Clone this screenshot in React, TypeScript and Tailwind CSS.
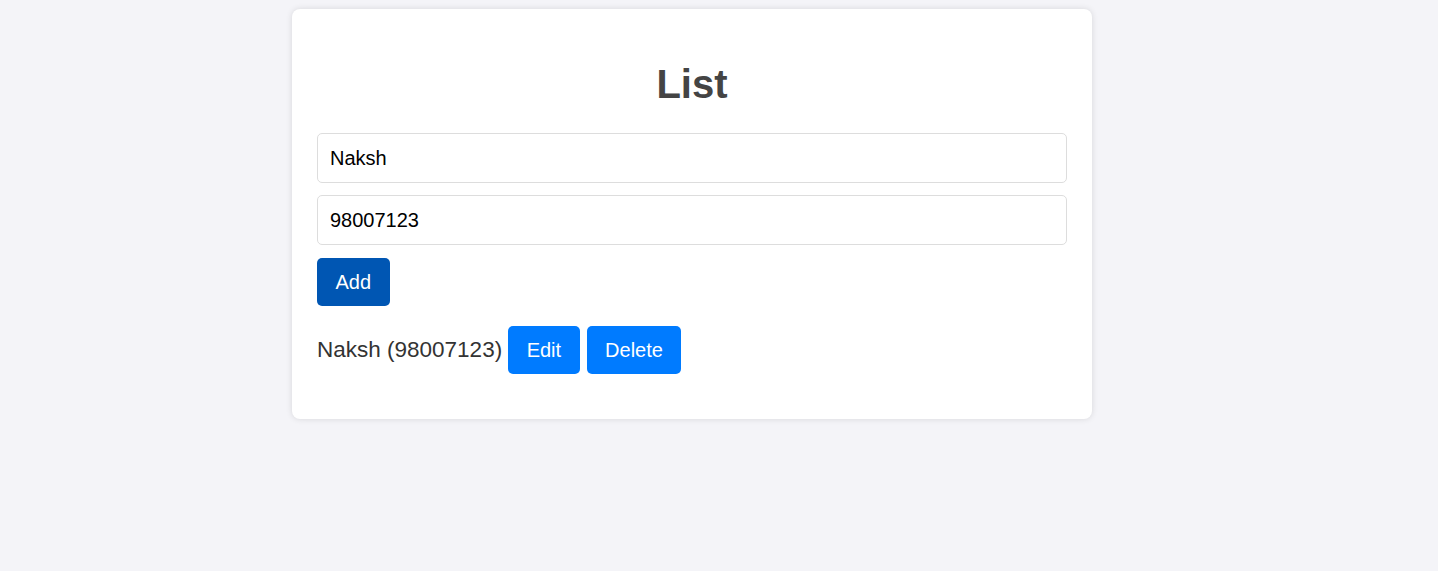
import { useState } from "react";

type Contact = { name: string; phone: string };

export default function App() {
  const [name, setName] = useState("Naksh");
  const [phone, setPhone] = useState("98007123");
  const [items, setItems] = useState<Contact[]>([{ name: "Naksh", phone: "98007123" }]);

  const handleAdd = () => {
    if (!name || !phone) return;
    setItems([...items, { name, phone }]);
  };

  const handleDelete = (i: number) => {
    setItems(items.filter((_, idx) => idx !== i));
  };

  return (
    <div className="min-h-screen bg-[#f4f4f8] pt-[9px] font-['Liberation_Sans',Arial,sans-serif]">
      <div className="ml-[292px] w-[800px] rounded-lg bg-white px-[25px] pb-[25px] pt-[25px] shadow-[0_0_6px_rgba(0,0,0,0.12)]">
        <h1 className="mb-[26px] mt-[27px] text-center text-[40px] font-bold leading-[46px] text-[#444]">List</h1>
        <div className="flex flex-col gap-3">
          <input
            className="h-[50px] w-full rounded-[5px] border border-[#ddd] px-3 text-[20px] text-black outline-none"
            value={name}
            onChange={(e) => setName(e.target.value)}
          />
          <input
            className="h-[50px] w-full rounded-[5px] border border-[#ddd] px-3 text-[20px] text-black outline-none"
            value={phone}
            onChange={(e) => setPhone(e.target.value)}
          />
        </div>
        <button
          className="mt-[13px] h-12 rounded-[5px] bg-[#0056b3] px-[18.5px] text-[20px] text-white"
          onClick={handleAdd}
        >
          Add
        </button>
        <ul className="mt-5">
          {items.map((item, i) => (
            <li key={i} className="mb-5 flex items-center">
              <span className="text-[22.5px] text-[#333]">
                {item.name} ({item.phone})
              </span>
              <button className="ml-[6px] h-12 rounded-[5px] bg-[#007bff] px-[18.5px] text-[20px] text-white">
                Edit
              </button>
              <button
                className="ml-[7px] h-12 rounded-[5px] bg-[#007bff] px-[18.5px] text-[20px] text-white"
                onClick={() => handleDelete(i)}
              >
                Delete
              </button>
            </li>
          ))}
        </ul>
      </div>
    </div>
  );
}
